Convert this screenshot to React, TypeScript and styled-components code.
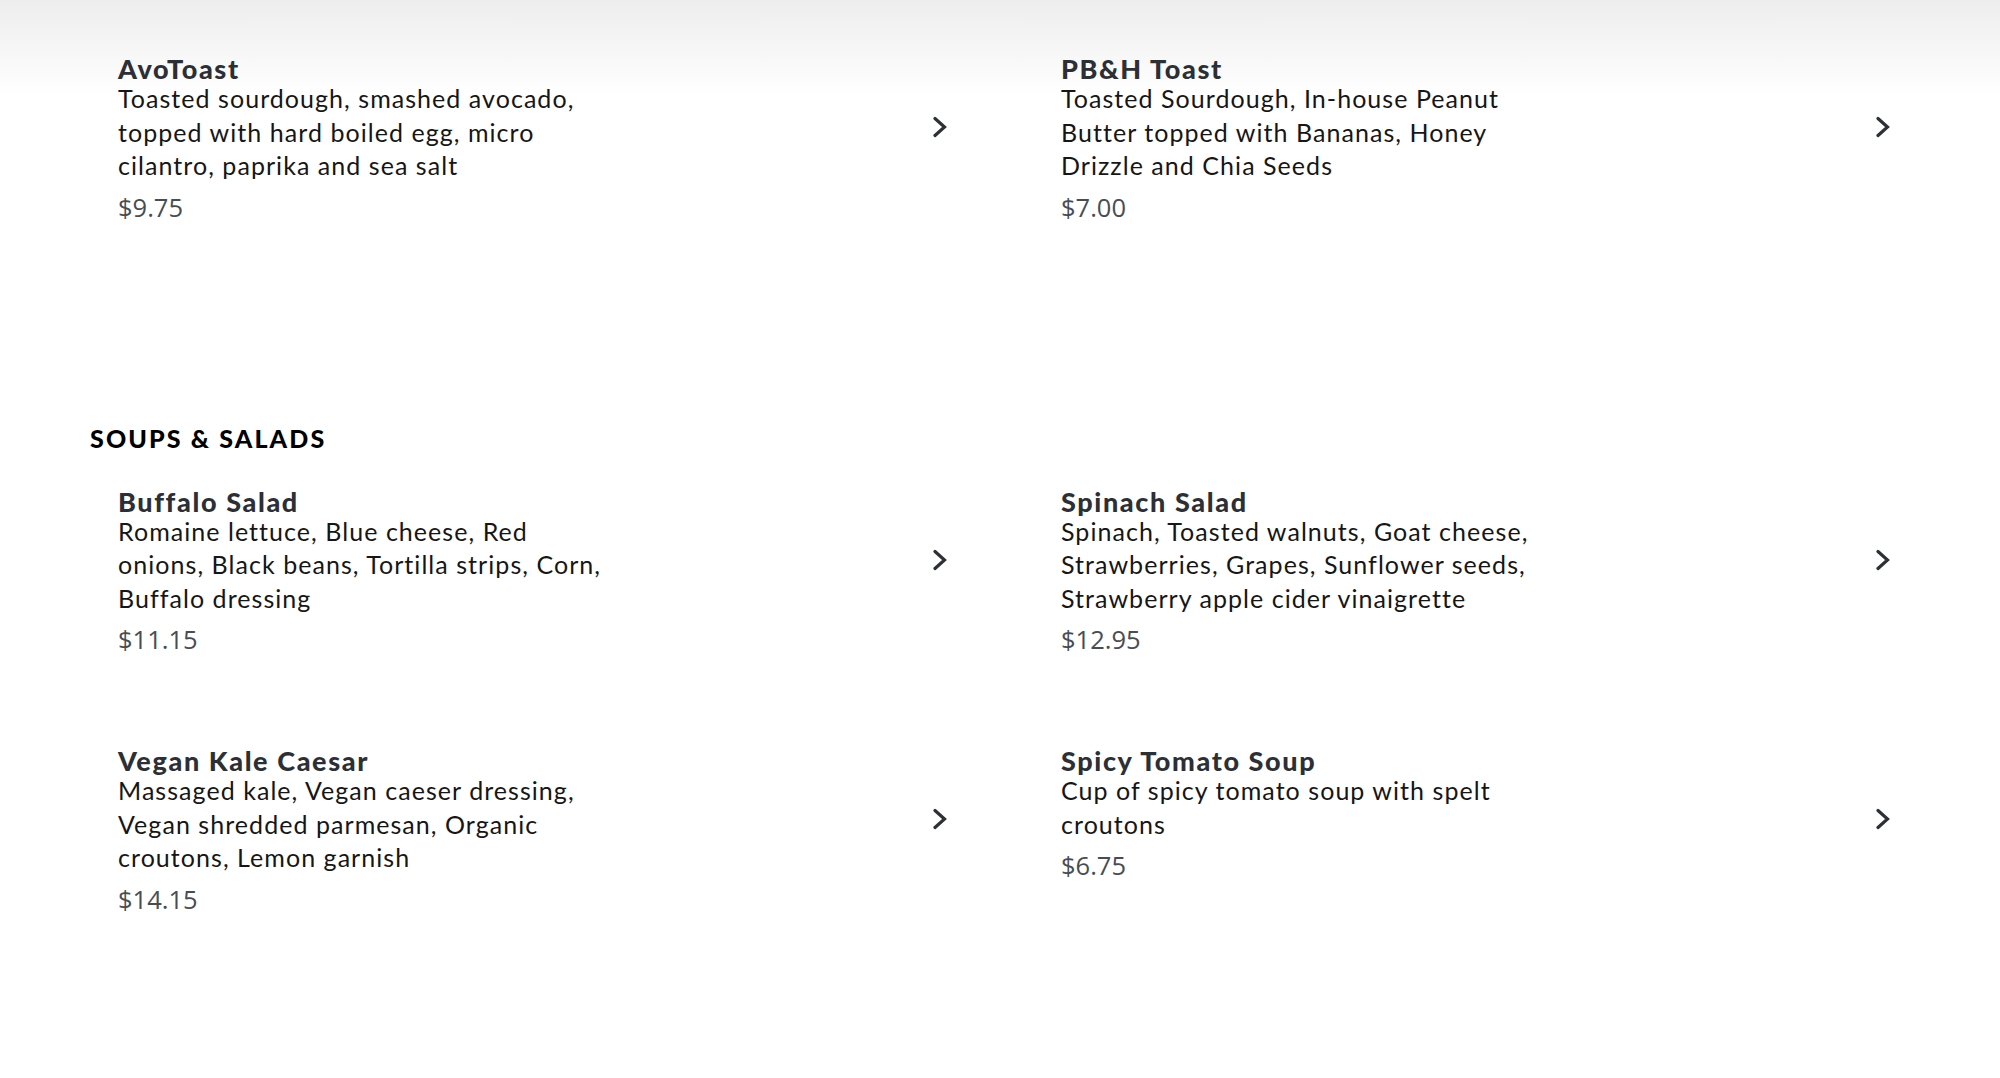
import React from "react";
import styled, { createGlobalStyle } from "styled-components";

const GlobalStyle = createGlobalStyle`
  html, body {
    margin: 0;
    padding: 0;
    background: #ffffff;
  }
  body {
    font-family: "Lato", "Liberation Sans", sans-serif;
    -webkit-font-smoothing: antialiased;
  }
`;

type Item = { name: string; desc: string; price: string };

const toasts: Item[] = [
  {
    name: "AvoToast",
    desc: "Toasted sourdough, smashed avocado, topped with hard boiled egg, micro cilantro, paprika and sea salt",
    price: "$9.75",
  },
  {
    name: "PB&H Toast",
    desc: "Toasted Sourdough, In-house Peanut Butter topped with Bananas, Honey Drizzle and Chia Seeds",
    price: "$7.00",
  },
];

const soups: Item[] = [
  {
    name: "Buffalo Salad",
    desc: "Romaine lettuce, Blue cheese, Red onions, Black beans, Tortilla strips, Corn, Buffalo dressing",
    price: "$11.15",
  },
  {
    name: "Spinach Salad",
    desc: "Spinach, Toasted walnuts, Goat cheese, Strawberries, Grapes, Sunflower seeds, Strawberry apple cider vinaigrette",
    price: "$12.95",
  },
  {
    name: "Vegan Kale Caesar",
    desc: "Massaged kale, Vegan caeser dressing, Vegan shredded parmesan, Organic croutons, Lemon garnish",
    price: "$14.15",
  },
  {
    name: "Spicy Tomato Soup",
    desc: "Cup of spicy tomato soup with spelt croutons",
    price: "$6.75",
  },
];

const Page = styled.main`
  min-height: 1078px;
  box-sizing: border-box;
  padding: 28px 90px 0 90px;
  background: linear-gradient(to bottom, #ededed 0px, #ffffff 95px) no-repeat;
`;

const Section = styled.section`
  & + & {
    margin-top: 172px;
  }
`;

const SectionTitle = styled.h2`
  margin: 0 0 8px 0;
  font-family: "Lato", "Liberation Sans", sans-serif;
  font-weight: 900;
  font-size: 25px;
  line-height: 30px;
  letter-spacing: 0.085em;
  color: #000000;
`;

const Grid = styled.div`
  display: grid;
  grid-template-columns: 1fr 1fr;
  column-gap: 66px;
  row-gap: 37px;
`;

const Card = styled.div`
  display: flex;
  align-items: flex-start;
  justify-content: space-between;
  padding: 28px 20px 28px 28px;
  cursor: pointer;
`;

const Info = styled.div`
  display: flex;
  flex-direction: column;
  max-width: 490px;
`;

const Name = styled.h3`
  margin: 0;
  font-family: "Lato", "Liberation Sans", sans-serif;
  font-weight: 900;
  font-size: 27px;
  line-height: 26px;
  letter-spacing: 0.06em;
  color: #2c3036;
`;

const Desc = styled.p`
  margin: 0;
  font-family: "Lato", "Liberation Sans", sans-serif;
  font-weight: 400;
  font-size: 25px;
  line-height: 33.5px;
  letter-spacing: 1.05px;
  color: #161616;
`;

const Price = styled.div`
  margin-top: 8px;
  font-family: "Open Sans", "Liberation Sans", sans-serif;
  font-weight: 400;
  font-size: 25.5px;
  line-height: 32px;
  color: #484d54;
`;

const Chevron = styled.svg`
  flex: none;
  margin-top: 60px;
  width: 14px;
  height: 22px;
`;

const Arrow = () => (
  <Chevron viewBox="0 0 14 22" aria-hidden="true">
    <polyline
      points="2,2.5 11.5,11 2,19.5"
      fill="none"
      stroke="#2d3136"
      strokeWidth="3.2"
      strokeLinecap="round"
      strokeLinejoin="miter"
    />
  </Chevron>
);

const MenuCard = ({ item }: { item: Item }) => (
  <Card>
    <Info>
      <Name>{item.name}</Name>
      <Desc>{item.desc}</Desc>
      <Price>{item.price}</Price>
    </Info>
    <Arrow />
  </Card>
);

export default function App() {
  return (
    <>
      <GlobalStyle />
      <Page>
        <Section>
          <Grid>
            {toasts.map((it) => (
              <MenuCard key={it.name} item={it} />
            ))}
          </Grid>
        </Section>
        <Section>
          <SectionTitle>SOUPS &amp; SALADS</SectionTitle>
          <Grid>
            {soups.map((it) => (
              <MenuCard key={it.name} item={it} />
            ))}
          </Grid>
        </Section>
      </Page>
    </>
  );
}
